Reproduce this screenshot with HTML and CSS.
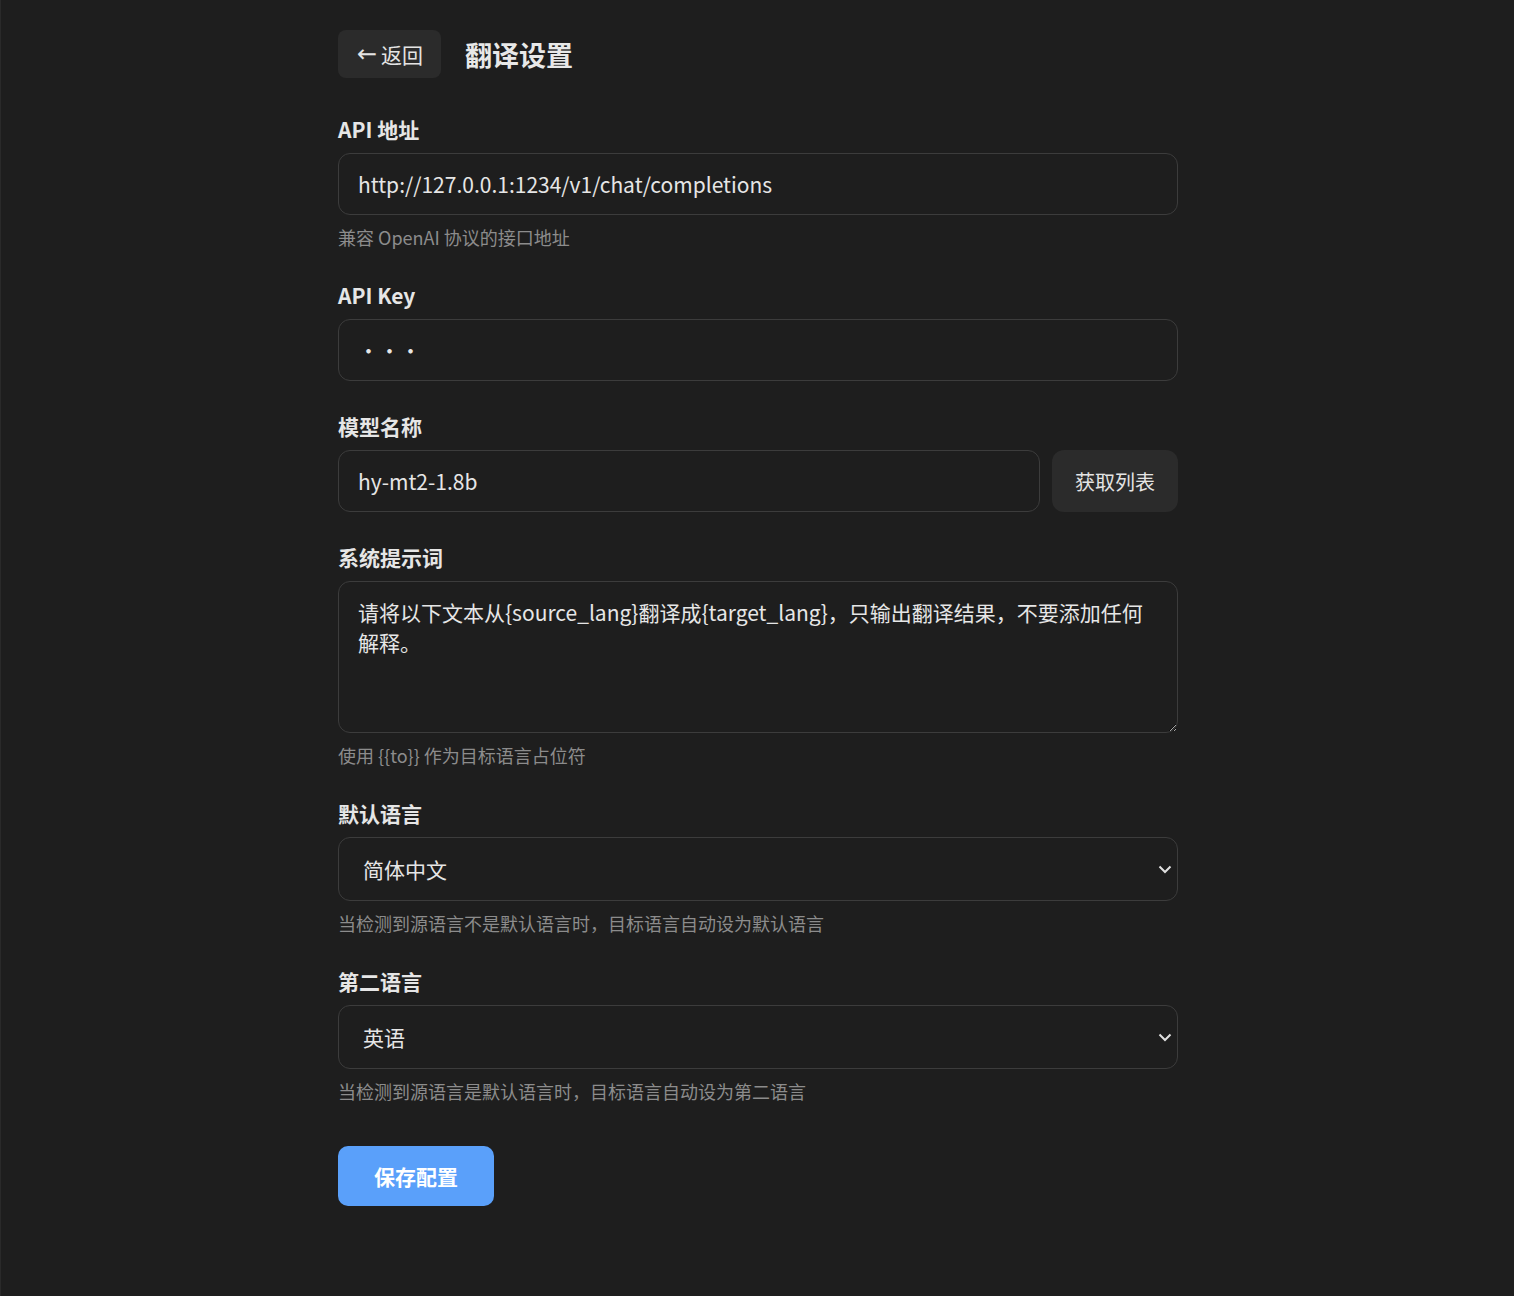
FILE: index.html
```html
<!DOCTYPE html>
<html lang="zh-CN">
<head>
  <meta charset="UTF-8">
  <meta name="viewport" content="width=device-width, initial-scale=1.0">
  <title>翻译设置</title>
  <link rel="stylesheet" href="styles.css">
</head>
<body>
  <main class="settings">
    <header class="top-bar">
      <button class="back-btn"><span class="arrow">←</span>返回</button>
      <h1>翻译设置</h1>
    </header>

    <div class="field">
      <label for="apiUrl">API 地址</label>
      <input type="text" id="apiUrl" value="http://127.0.0.1:1234/v1/chat/completions">
      <p class="hint">兼容 OpenAI 协议的接口地址</p>
    </div>

    <div class="field">
      <label for="apiKey">API Key</label>
      <input type="password" id="apiKey" value="abc">
    </div>

    <div class="field">
      <label for="model">模型名称</label>
      <div class="row">
        <input type="text" id="model" value="hy-mt2-1.8b">
        <button class="ghost-btn">获取列表</button>
      </div>
    </div>

    <div class="field">
      <label for="prompt">系统提示词</label>
      <textarea id="prompt" rows="4">请将以下文本从{source_lang}翻译成{target_lang}，只输出翻译结果，不要添加任何解释。</textarea>
      <p class="hint">使用 {{to}} 作为目标语言占位符</p>
    </div>

    <div class="field">
      <label for="defaultLang">默认语言</label>
      <div class="select-wrap">
        <select id="defaultLang">
          <option>简体中文</option>
          <option>英语</option>
        </select>
        <svg class="chevron" width="14" height="9" viewBox="0 0 14 9"><path d="M1.5 1.5 7 7l5.5-5.5" fill="none" stroke="#e0e0e0" stroke-width="2"/></svg>
      </div>
      <p class="hint">当检测到源语言不是默认语言时，目标语言自动设为默认语言</p>
    </div>

    <div class="field">
      <label for="secondLang">第二语言</label>
      <div class="select-wrap">
        <select id="secondLang">
          <option>英语</option>
          <option>简体中文</option>
        </select>
        <svg class="chevron" width="14" height="9" viewBox="0 0 14 9"><path d="M1.5 1.5 7 7l5.5-5.5" fill="none" stroke="#e0e0e0" stroke-width="2"/></svg>
      </div>
      <p class="hint">当检测到源语言是默认语言时，目标语言自动设为第二语言</p>
    </div>

    <button class="save-btn">保存配置</button>
  </main>
</body>
</html>
```

FILE: styles.css
```css
html {
  color-scheme: dark;
}
body {
  margin: 0;
  padding-left: 1px;
  min-height: 1296px;
  box-sizing: border-box;
  background: #1e1e1e;
  color: #e4e4e4;
  font-family: "Noto Sans CJK SC", "Noto Sans", sans-serif;
  border-left: 1px solid #2a2a2a;
}
.settings {
  width: 840px;
  margin: 0 auto;
  padding: 30px 0 60px;
}
.top-bar {
  display: flex;
  align-items: center;
  gap: 24px;
  margin-bottom: 36px;
}
.top-bar h1 {
  margin: 0;
  font-size: 27px;
  font-weight: 700;
  color: #e8e8e8;
}
.back-btn {
  display: flex;
  align-items: center;
  height: 48px;
  padding: 0 18px 0 19px;
  border: none;
  border-radius: 8px;
  background: #2b2b2b;
  color: #e4e4e4;
  font: inherit;
  font-size: 21px;
}
.back-btn .arrow {
  font-family: "DejaVu Sans", sans-serif;
  font-size: 24px;
  line-height: 1;
  margin-right: 4px;
}
.field {
  margin-bottom: 30px;
}
.field label {
  display: block;
  font-size: 21px;
  line-height: 31px;
  font-weight: 600;
  margin-bottom: 8px;
  color: #e6e6e6;
}
.field input,
.field textarea,
.field select {
  display: block;
  width: 100%;
  box-sizing: border-box;
  background: #1e1e1e;
  color: #e6e6e6;
  border: 1px solid #3c3c3c;
  border-radius: 12px;
  font: inherit;
  font-size: 21px;
  line-height: 30px;
  padding: 15px 19px;
  outline: none;
}
.field textarea {
  height: 152px;
  resize: vertical;
}
.select-wrap {
  position: relative;
}
.field select {
  appearance: none;
  height: 64px;
  padding: 0 40px 0 24px;
}
.chevron {
  position: absolute;
  right: 6px;
  top: 28px;
  pointer-events: none;
}
.row {
  display: flex;
  gap: 12px;
}
.row input {
  flex: 1;
}
.ghost-btn {
  flex: none;
  width: 126px;
  border: none;
  border-radius: 12px;
  background: #2b2b2b;
  color: #e4e4e4;
  font: inherit;
  font-size: 20px;
}
.hint {
  margin: 10px 0 0;
  font-size: 18px;
  line-height: 25px;
  color: #8c8c8c;
}
.save-btn {
  margin-top: 12px;
  width: 156px;
  height: 60px;
  border: none;
  border-radius: 10px;
  background: #5aa0fa;
  color: #ffffff;
  font: inherit;
  font-size: 21px;
  font-weight: 700;
}
```
